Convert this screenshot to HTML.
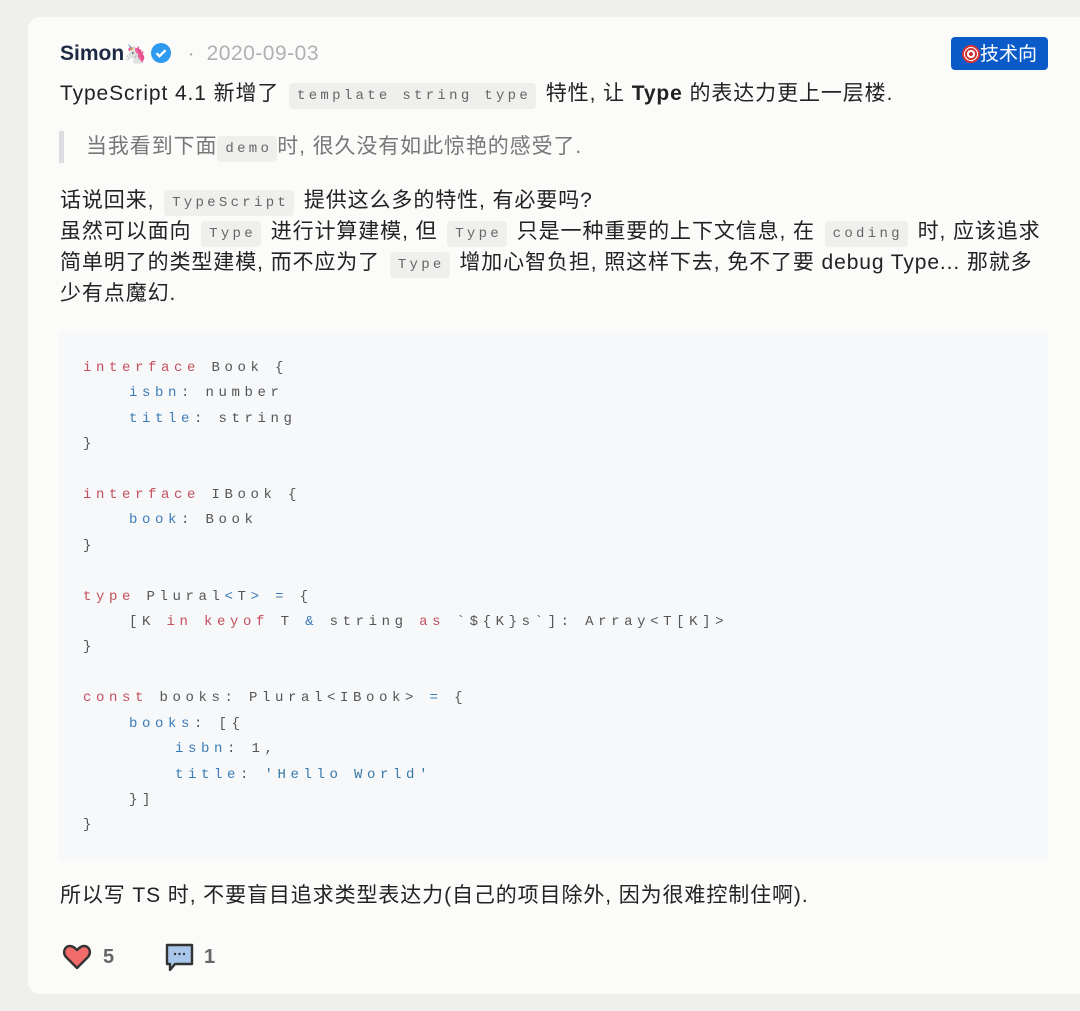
<!DOCTYPE html>
<html><head><meta charset="utf-8"><style>
body{margin:0;width:1080px;height:1011px;background:#efefed;font-family:"Liberation Sans","Noto Sans CJK SC",sans-serif;overflow:hidden}
.card{position:absolute;left:28px;top:17px;width:1070px;height:977px;background:#fbfbfa;border-radius:12px}
.t{position:absolute;left:60px;font-size:21px;letter-spacing:0.9px;color:#222;white-space:nowrap;line-height:31px}
code{font-family:"Liberation Mono",monospace;font-size:14px;line-height:1;letter-spacing:3.3px;background:#efefed;color:#666;padding:5px 5px 5px 8px;border-radius:4px;margin:0 3px;vertical-align:1px}
.code{position:absolute;left:59px;top:332px;width:989px;height:528px;background:#f6f8fa}
.code pre{margin:0;position:absolute;left:24px;top:24px;font-family:"Liberation Mono",monospace;font-size:14px;letter-spacing:4.6px;word-spacing:-1.5px;line-height:25.4px;color:#555}
.k{color:#c4505e}.p{color:#3b7cb8}.s{color:#3a7aa8}
</style></head><body>
<div class="card"></div>
<div class="t" style="top:38px;letter-spacing:0"><span style="color:#1d2a44;font-weight:600">Simon</span><span style="font-size:18px">🦄</span><svg width="22" height="22" viewBox="0 0 22 22" style="vertical-align:-4px;margin-left:3px"><circle cx="11" cy="11" r="10" fill="#2f9bf0"/><path d="M6.5 11.2l3 3 6-6" stroke="#fff" stroke-width="2.4" fill="none"/></svg><span style="color:#aaa;margin:0 12px 0 16px">·</span><span style="color:#b0b0b0;letter-spacing:0.5px">2020-09-03</span></div>
<div style="position:absolute;left:951px;top:37px;width:97px;height:33px;background:#0a5bc8;border-radius:4px;color:#fff;font-family:'Noto Sans CJK SC',sans-serif;font-size:19px;line-height:32px;text-align:center"><span style="display:inline-block;width:18px;height:18px;border-radius:50%;background:radial-gradient(circle,#c33 0 2px,#fff 2px 4px,#c33 4px 6px,#fff 6px 7px,#d33 7px);vertical-align:-3px"></span>技术向</div>
<div class="t" style="top:78px">TypeScript 4.1 新增了 <code>template string type</code> 特性, 让 <b>Type</b> 的表达力更上一层楼.</div>
<div style="position:absolute;left:59px;top:131px;width:5px;height:32px;background:#dcdde0"></div>
<div class="t" style="top:131px;left:86px;color:#777">当我看到下面<code style="margin:0">demo</code>时, 很久没有如此惊艳的感受了.</div>
<div class="t" style="top:185px">话说回来, <code>TypeScript</code> 提供这么多的特性, 有必要吗?<br>虽然可以面向 <code>Type</code> 进行计算建模, 但 <code>Type</code> 只是一种重要的上下文信息, 在 <code>coding</code> 时, 应该追求<br>简单明了的类型建模, 而不应为了 <code>Type</code> 增加心智负担, 照这样下去, 免不了要 debug Type... 那就多<br>少有点魔幻.</div>
<div class="code"><pre><span class="k">interface</span> Book {
    <span class="p">isbn</span>: number
    <span class="p">title</span>: string
}

<span class="k">interface</span> IBook {
    <span class="p">book</span>: Book
}

<span class="k">type</span> Plural<span class="p">&lt;</span>T<span class="p">&gt;</span> <span class="p">=</span> {
    [K <span class="k">in</span> <span class="k">keyof</span> T <span class="p">&amp;</span> string <span class="k">as</span> `${K}s`]: Array&lt;T[K]&gt;
}

<span class="k">const</span> books: Plural&lt;IBook&gt; <span class="p">=</span> {
    <span class="p">books</span>: [{
        <span class="p">isbn</span>: 1,
        <span class="p">title</span>: <span class="s">'Hello World'</span>
    }]
}</pre></div>
<div class="t" style="top:880px">所以写 TS 时, 不要盲目追求类型表达力(自己的项目除外, 因为很难控制住啊).</div>
<svg style="position:absolute;left:62px;top:942px" width="30" height="30" viewBox="0 0 30 30"><path d="M15 26 L4 15 C0 10 3 4 8 4 C11 4 13 6 15 8 C17 6 19 4 22 4 C27 4 30 10 26 15 Z" fill="#f26b6b" stroke="#333" stroke-width="2.4" stroke-linejoin="round"/></svg>
<div class="t" style="top:942px;left:103px;color:#666;font-weight:bold;font-size:20px">5</div>
<svg style="position:absolute;left:165px;top:943px" width="30" height="30" viewBox="0 0 30 30"><path d="M2 2 H27 V21 H10 L5 27 V21 H2 Z" fill="#a9c7ea" stroke="#333" stroke-width="2.4" stroke-linejoin="round"/><circle cx="10" cy="11" r="1.2" fill="#333"/><circle cx="14.5" cy="11" r="1.2" fill="#333"/><circle cx="19" cy="11" r="1.2" fill="#333"/></svg>
<div class="t" style="top:942px;left:204px;color:#666;font-weight:bold;font-size:20px">1</div>
</body></html>
